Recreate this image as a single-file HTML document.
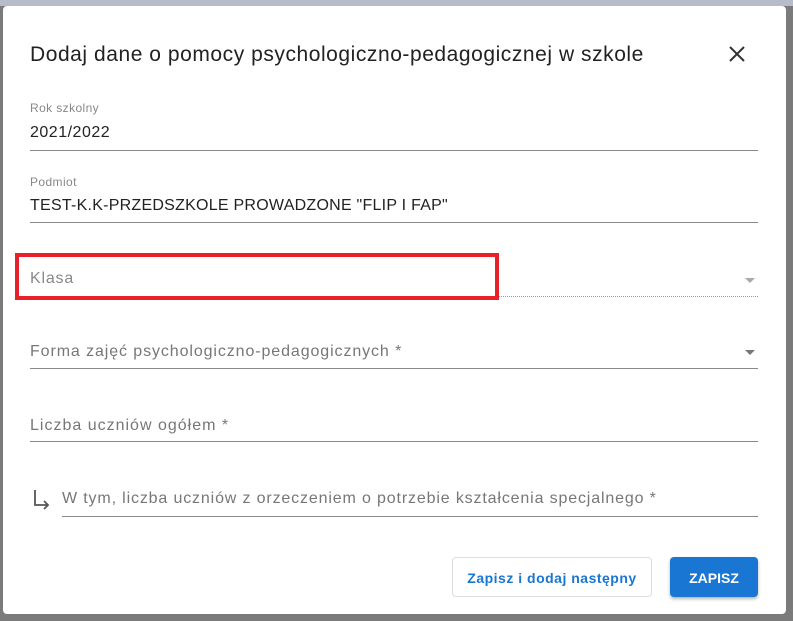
<!DOCTYPE html>
<html><head><meta charset="utf-8"><style>
body{margin:0;width:793px;height:621px;background:#7b7b7b;position:relative;overflow:hidden;font-family:"Liberation Sans",sans-serif;}
.top{position:absolute;left:0;top:0;width:793px;height:6px;background:#b7bccb;}
.dlg{position:absolute;left:3px;top:6px;width:783px;height:608px;background:#fff;border-radius:4px;}
.t{position:absolute;white-space:nowrap;}
.line{position:absolute;height:1px;background:#8a8a8a;}
.dot{position:absolute;height:0;border-top:1px dotted #999;}
.arr{position:absolute;width:0;height:0;border-left:5px solid transparent;border-right:5px solid transparent;border-top:5px solid #777;}
</style></head><body>
<div class="top"></div>
<div class="dlg"></div>
<div class="t" style="left:30px;top:43px;font-size:21px;color:#222;letter-spacing:0.55px">Dodaj dane o pomocy psychologiczno-pedagogicznej w szkole</div>
<svg style="position:absolute;left:729px;top:46px" width="16" height="16"><path d="M1 1L15 15M15 1L1 15" stroke="#333" stroke-width="2"/></svg>
<div class="t" style="left:30px;top:101px;font-size:12px;color:#888;letter-spacing:0.4px">Rok szkolny</div>
<div class="t" style="left:30px;top:124px;font-size:16px;color:#222;letter-spacing:0.5px">2021/2022</div>
<div class="line" style="left:30px;width:728px;top:150px"></div>
<div class="t" style="left:30px;top:175px;font-size:12px;color:#888;letter-spacing:0.4px">Podmiot</div>
<div class="t" style="left:30px;top:197px;font-size:16px;color:#222;letter-spacing:0.25px">TEST-K.K-PRZEDSZKOLE PROWADZONE "FLIP I FAP"</div>
<div class="line" style="left:30px;width:728px;top:222px"></div>
<div class="t" style="left:30px;top:270px;font-size:16px;color:#888;letter-spacing:0.8px">Klasa</div>
<div class="arr" style="left:745px;top:278px;border-top-color:#aaa"></div>
<div class="dot" style="left:30px;width:728px;top:296px"></div>
<div style="position:absolute;left:15px;top:253px;width:476px;height:39px;border:4px solid #e8202a"></div>
<div class="t" style="left:30px;top:343px;font-size:16px;color:#777;letter-spacing:0.9px">Forma zajęć psychologiczno-pedagogicznych *</div>
<div class="arr" style="left:745px;top:350px"></div>
<div class="line" style="left:30px;width:728px;top:368px"></div>
<div class="t" style="left:30px;top:417px;font-size:16px;color:#777;letter-spacing:1px">Liczba uczniów ogółem *</div>
<div class="line" style="left:30px;width:728px;top:441px"></div>
<svg style="position:absolute;left:32px;top:489px" width="20" height="22"><path d="M3 1V16H16M12 12L16 16L12 20" stroke="#555" stroke-width="1.8" fill="none"/></svg>
<div class="t" style="left:62px;top:490px;font-size:16px;color:#777;letter-spacing:0.85px">W tym, liczba uczniów z orzeczeniem o potrzebie kształcenia specjalnego *</div>
<div class="line" style="left:62px;width:696px;top:516px"></div>
<div style="position:absolute;left:452px;top:557px;width:198px;height:38px;border:1px solid #ddd;border-radius:4px;color:#1976d2;font-size:14px;font-weight:bold;text-align:center;line-height:40px;letter-spacing:0.5px">Zapisz i dodaj następny</div>
<div style="position:absolute;left:670px;top:557px;width:88px;height:40px;background:#1976d2;border-radius:4px;color:#fff;font-size:14px;font-weight:bold;text-align:center;line-height:42px;box-shadow:0 2px 3px rgba(0,0,0,.3)">ZAPISZ</div>
</body></html>
